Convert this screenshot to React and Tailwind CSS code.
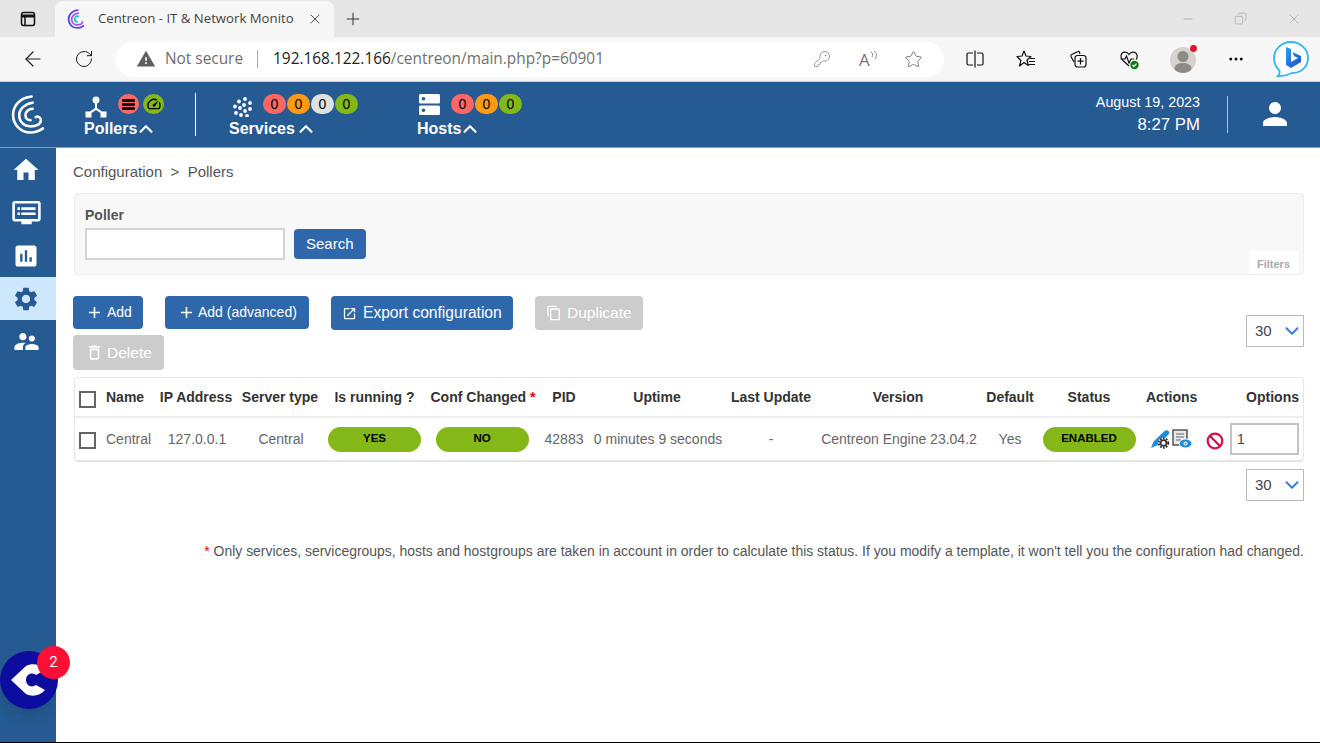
import React from 'react';
import { ArrowLeft, RotateCw, KeyRound, Star, Plus, X, Minus, Copy, MoreHorizontal, ChevronUp, ChevronDown } from 'lucide-react';
import { MdWarning, MdHome, MdDvr, MdAssessment, MdSettings, MdSupervisorAccount, MdPerson, MdAdd, MdOpenInNew, MdContentCopy, MdDeleteOutline, MdSpeed } from 'react-icons/md';

const gridCols = 'grid-cols-[25px_55px_82px_86px_103px_114px_48px_138px_90px_164px_60px_98px_92px_74px]';

const Dot = ({ color, children }) => (
  <span className={`flex h-[20px] w-[23px] items-center justify-center rounded-full text-sm text-black ${color}`}>{children}</span>
);

const Logo = () => (
  <svg width="34" height="41" viewBox="0 0 33 39" fill="none" stroke="white" strokeWidth="2.5" strokeLinecap="round">
    <path d="M20 2C9 3 2 11 2 20c0 10 8 17 17 17 5 0 9-2 12-4" />
    <path d="M21 8C14 9 8 14 8 20c0 7 5 11 11 11 5 0 10-2 10-6 0-3-3-4-5-3" />
    <path d="M21 14c-4 0-7 3-7 6s2 5 5 5" />
  </svg>
);

const PollersIcon = () => (
  <svg width="24" height="22" viewBox="0 0 24 22" fill="white">
    <circle cx="12" cy="4" r="3.5" />
    <path d="M11 6h2v6l5.500 4-1.200 1.500L12 14l-5.300 3.500L5.500 16 11 12z" />
    <rect x="1.500" y="15.500" width="6" height="6" />
    <rect x="16.500" y="15.500" width="6" height="6" />
  </svg>
);

const ServicesIcon = () => (
  <svg width="20" height="20" viewBox="0 0 20 20" fill="white">
    {[[12, 2], [6, 4.500], [17, 6], [11, 8], [2, 9.500], [7, 11], [17, 12], [12, 14], [3, 16], [8, 18], [14, 19]].map(([cx, cy]) => (
      <circle key={`${cx}-${cy}`} cx={cx} cy={cy} r="1.900" />
    ))}
  </svg>
);

const HostsIcon = () => (
  <svg width="21" height="21" viewBox="0 0 21 21">
    <rect fill="white" x="0" y="0" width="21" height="9.500" rx="1.500" />
    <rect fill="white" x="0" y="11.500" width="21" height="9.500" rx="1.500" />
    <circle cx="4.500" cy="4.700" r="1.800" fill="#255a92" />
    <circle cx="4.500" cy="16.200" r="1.800" fill="#255a92" />
  </svg>
);

const SplitIcon = () => (
  <svg width="20" height="20" viewBox="0 0 20 20" fill="none" stroke="#111" strokeWidth="1.200">
    <path d="M8 4H3.500A1.500 1.500 0 0 0 2 5.500v9A1.500 1.500 0 0 0 3.500 16H8" />
    <path d="M12 4h4.500A1.500 1.500 0 0 1 18 5.500v9a1.500 1.500 0 0 1-1.500 1.500H12" />
    <path d="M10 1.500v17" />
  </svg>
);

const FavoritesIcon = () => (
  <svg width="20" height="20" viewBox="0 0 20 20" fill="none" stroke="#111" strokeWidth="1.200" strokeLinejoin="round">
    <path d="M8 2l2 5 5 .5-4 3.500 1.300 5.500L8 13.500l-4.500 3.500 1.400-5.500L1 7.500 6 7z" />
    <path d="M14 9.500h5M13 12.500h6M13 15.500h6" />
  </svg>
);

const CollectionsIcon = () => (
  <svg width="20" height="20" viewBox="0 0 20 20" fill="none" stroke="#111" strokeWidth="1.200">
    <path d="M6 13 3 7.500a1.500 1.500 0 0 1 .7-2L9.500 2.700a1.500 1.500 0 0 1 2 .6L12 5" />
    <rect x="7" y="6.500" width="11" height="11.500" rx="2.500" />
    <path d="M12.500 9v6.500M9.500 12.200h6" />
  </svg>
);

const HealthIcon = () => (
  <svg width="21" height="21" viewBox="0 0 21 21" fill="none">
    <path d="M10 17 3.500 11C1 8.500 1.500 4 5 3.200c2-.4 4 .6 5 2.300 1-1.700 3-2.700 5-2.300 3.500.8 4 5 2 7.500" stroke="#111" strokeWidth="1.200" />
    <path d="M1.500 10H6l1.500-3 2.500 7 2-4h3" stroke="#111" strokeWidth="1.200" />
    <circle cx="15.500" cy="16" r="4.200" fill="#107c10" />
    <path d="M13.500 16l1.500 1.500 2.500-2.800" stroke="white" strokeWidth="1.200" />
  </svg>
);

const Avatar = () => (
  <svg width="28" height="30" viewBox="0 0 28 30">
    <circle cx="13" cy="16" r="13" fill="#d6d3cf" />
    <circle cx="13" cy="12.500" r="5.500" fill="#8d8a87" />
    <ellipse cx="13" cy="24" rx="8.500" ry="5" fill="#8d8a87" />
    <circle cx="23.500" cy="4.500" r="3.400" fill="#e81123" />
  </svg>
);

const BingIcon = () => (
  <svg width="36" height="36" viewBox="0 0 36 36" fill="none">
    <defs>
      <linearGradient id="bingB" x1="0" y1="0" x2="1" y2="1">
        <stop offset="0" stopColor="#2aa0f0" />
        <stop offset="1" stopColor="#1a4fd0" />
      </linearGradient>
    </defs>
    <path d="M18 1c9 0 17 7 17 16s-7 15-16 15c-4 2-8 3-14 3 2-2 2-4 1-6C3 26 1 22 1 17 1 8 9 1 18 1z" fill="white" stroke="#35b5ef" strokeWidth="1.800" />
    <path d="M13 6l5 2v13l7-4-4-2-1.500-4L28 15v6l-10 6-5-3z" fill="url(#bingB)" />
  </svg>
);

const BrowserChrome = () => (
  <div className="font-['Open_Sans',sans-serif]">
    <div className="flex h-[37px] bg-[#e6e6e6]">
      <div className="flex w-[55px] items-center justify-center">
        <svg width="16" height="16" viewBox="0 0 16 16" fill="none" stroke="#111" strokeWidth="1.500">
          <rect x="1.500" y="1.500" width="13" height="13" rx="2" />
          <path d="M1.500 5h13" strokeWidth="3" />
          <path d="M5 5v9" />
        </svg>
      </div>
      <div className="mt-[1px] flex w-[279px] items-center rounded-t-lg bg-[#f7f7f7] pl-[12px]">
        <svg width="18" height="20" viewBox="0 0 33 39" fill="none" strokeWidth="3.500" strokeLinecap="round">
          <path stroke="#4f46e5" d="M20 2C9 3 2 11 2 20c0 10 8 17 17 17 5 0 9-2 12-4" />
          <path stroke="#a855f7" d="M21 8C14 9 8 14 8 20c0 7 5 11 11 11 5 0 10-2 10-6" />
          <path stroke="#22c7a9" d="M21 14c-4 0-7 3-7 6s2 5 5 5" />
        </svg>
        <span className="ml-[13px] w-[200px] whitespace-nowrap text-[13.2px] text-[#444]">Centreon - IT &amp; Network Monito</span>
        <X size={16} strokeWidth={1.300} className="ml-[9px] text-[#333]" />
      </div>
      <div className="flex w-[38px] items-center justify-center">
        <Plus size={20} strokeWidth={1.200} className="text-[#333]" />
      </div>
      <div className="ml-auto flex items-center gap-[39px] pr-[18px] text-[#a5a5a5]">
        <Minus size={14} strokeWidth={1.500} />
        <Copy size={13} strokeWidth={1.300} className="-scale-x-100" />
        <X size={16} strokeWidth={1.100} />
      </div>
    </div>
    <div className="flex h-[45px] items-center border-b border-[#cfcfcf] bg-[#f7f7f7]">
      <div className="flex w-[116px] items-center pl-[21px]">
        <ArrowLeft size={24} strokeWidth={1.200} className="text-[#222]" />
        <RotateCw size={20} strokeWidth={1.200} className="ml-[29px] text-[#222]" />
      </div>
      <div className="flex h-[35px] w-[828px] items-center rounded-full bg-white pl-[20px]">
        <MdWarning size={20} className="text-[#5f5f5f]" />
        <span className="ml-[9px] text-[15.400px] text-[#6f6f6f]">Not secure</span>
        <span className="ml-[14px] h-[18px] w-px bg-[#aaa]" />
        <span className="ml-[15px] text-[15.400px] text-[#222]">192.168.122.166<span className="text-[#6f6f6f]">/centreon/main.php?p=60901</span></span>
        <div className="ml-auto flex items-center pr-[21px] text-[#777]">
          <KeyRound size={18} strokeWidth={1} />
          <span className="ml-[28px] flex w-[20px] items-start text-[17px] leading-none">
            A
            <svg width="8" height="10" viewBox="0 0 8 10" fill="none" stroke="currentColor" strokeWidth="0.900">
              <path d="M1 1c2 1 2 3 1 5M4 0c3 2 3 5 1 8" />
            </svg>
          </span>
          <Star size={19} strokeWidth={1.200} className="ml-[25px]" />
        </div>
      </div>
      <div className="flex flex-1 items-center pl-[21px] text-[#111]">
        <SplitIcon />
        <span className="ml-[31px]"><FavoritesIcon /></span>
        <span className="ml-[32px]"><CollectionsIcon /></span>
        <span className="ml-[31px]"><HealthIcon /></span>
        <span className="ml-[30px]"><Avatar /></span>
        <MoreHorizontal size={18} className="ml-[29px]" />
        <span className="ml-[28px]"><BingIcon /></span>
      </div>
    </div>
  </div>
);

const Header = () => (
  <header className="flex h-[66px] items-stretch border-b border-[#7ea2c6] bg-[#255a92] font-['Liberation_Sans',sans-serif] text-white">
    <div className="flex w-[56px] items-center justify-center pb-[1px]">
      <Logo />
    </div>
    <div className="ml-[28px] flex w-[111px] flex-col pt-[12px]">
      <div className="flex h-[24px] items-start">
        <div className="mt-[2px]"><PollersIcon /></div>
        <span className="ml-[10px] flex h-[20px] w-[21px] items-center justify-center rounded-full bg-[#ff6666]">
          <svg width="13" height="13" viewBox="0 0 13 13" fill="#111"><rect y="1" width="13" height="3" rx="1" /><rect y="5" width="13" height="3" rx="1" /><rect y="9" width="13" height="3" rx="1" /></svg>
        </span>
        <span className="ml-[4px] flex h-[20px] w-[21px] items-center justify-center rounded-full bg-[#84b819] text-black">
          <MdSpeed size={16} />
        </span>
      </div>
      <div className="flex items-center text-[16px] font-bold leading-[20px]">
        Pollers<ChevronUp size={22} strokeWidth={2.400} className="-ml-[2px]" />
      </div>
    </div>
    <div className="my-[11px] w-px bg-white" />
    <div className="ml-[33px] flex w-[188px] flex-col pt-[12px]">
      <div className="flex h-[24px] items-start gap-[1px]">
        <div className="ml-[4px] mr-[9px] mt-[3px]"><ServicesIcon /></div>
        <Dot color="bg-[#ff6666]">0</Dot>
        <Dot color="bg-[#ff9a13]">0</Dot>
        <Dot color="bg-[#e0e0e0]">0</Dot>
        <Dot color="bg-[#84b819]">0</Dot>
      </div>
      <div className="flex items-center text-[16px] font-bold leading-[20px]">
        Services<ChevronUp size={22} strokeWidth={2.400} />
      </div>
    </div>
    <div className="flex flex-col pt-[12px]">
      <div className="flex h-[24px] items-start gap-[1px]">
        <div className="ml-[2px] mr-[10px]"><HostsIcon /></div>
        <Dot color="bg-[#ff6666]">0</Dot>
        <Dot color="bg-[#ff9a13]">0</Dot>
        <Dot color="bg-[#84b819]">0</Dot>
      </div>
      <div className="flex items-center text-[16px] font-bold leading-[20px]">
        Hosts<ChevronUp size={22} strokeWidth={2.400} className="-ml-[2px]" />
      </div>
    </div>
    <div className="ml-auto flex flex-col items-end pt-[10px] text-right">
      <div className="text-[14.300px] leading-[20px]">August 19, 2023</div>
      <div className="mt-[3px] text-[16.800px] leading-[20px]">8:27 PM</div>
    </div>
    <div className="my-[14px] ml-[27px] w-px bg-[#a9bfd6]" />
    <div className="flex w-[92px] items-center justify-center pb-[1px] pl-[2px]">
      <MdPerson size={36} />
    </div>
  </header>
);

const Sidebar = () => (
  <aside className="relative w-[56px] shrink-0 bg-[#255a92] pr-[4px] text-white">
    <div className="flex h-[43px] items-center justify-center"><MdHome size={30} /></div>
    <div className="flex h-[43px] items-center justify-center"><MdDvr size={31} /></div>
    <div className="flex h-[43px] items-center justify-center"><MdAssessment size={28} /></div>
    <div className="-mr-[4px] flex h-[43px] items-center justify-center bg-[#cde7fd] pr-[4px] text-[#255a92]"><MdSettings size={28} /></div>
    <div className="flex h-[43px] items-center justify-center"><MdSupervisorAccount size={29} /></div>
    <div className="absolute left-0 top-[503px] flex h-[58px] w-[58px] items-center justify-center rounded-full bg-[#0c0c9e] shadow-lg">
      <svg width="36" height="34" viewBox="0 0 36 34" fill="white">
        <path d="M0 17 15 3c6-3 14-2 19 4l-9 5c-4-3-10-1-10 5 0 6 6 8 10 5l9 5c-5 6-13 7-19 4z" />
      </svg>
      <span className="absolute -right-[12px] -top-[5px] flex h-[33px] w-[33px] items-center justify-center rounded-full bg-[#fa0f35] font-['Roboto',sans-serif] text-[15px] text-white">2</span>
    </div>
  </aside>
);

const Button = ({ icon, children, disabled, className = '' }) => (
  <button className={`flex items-center rounded text-[14px] text-white ${disabled ? 'bg-[#cccccc]' : 'bg-[#2e68aa]'} ${className}`}>
    {icon}
    {children}
  </button>
);

const Pill = ({ children }) => (
  <span className="flex h-[25px] w-[93px] items-center justify-center rounded-full bg-[#84b819] text-[11.500px] font-bold text-black">{children}</span>
);

const Checkbox = () => <span className="block h-[17px] w-[17px] border-2 border-[#666] bg-white" />;

const PageSelect = () => (
  <div className="flex h-[32px] w-[58px] items-center justify-between border border-[#bbb] bg-white pl-[8px] text-[15px] text-[#444]">
    30
    <ChevronDown size={22} strokeWidth={2.200} className="text-[#3d7fe0]" />
  </div>
);

const headers = ['IP Address', 'Server type', 'Is running ?'];

const PollersTable = () => (
  <div className="ml-px mt-[7px] rounded border border-[#e6e6e6] text-[14px] shadow-[0_1px_1px_rgba(0,0,0,0.12)]">
    <div className={`grid h-[40px] items-center border-b-2 border-[#eeeeee] text-center font-bold text-[#333] ${gridCols}`}>
      <div className="pl-[4px] pt-[4px]"><Checkbox /></div>
      <div className="pl-[6px] text-left">Name</div>
      {headers.map((label) => <div key={label} className="whitespace-nowrap">{label}</div>)}
      <div className="whitespace-nowrap">Conf Changed <span className="text-[#e00]">*</span></div>
      <div>PID</div>
      <div>Uptime</div>
      <div className="whitespace-nowrap">Last Update</div>
      <div>Version</div>
      <div>Default</div>
      <div>Status</div>
      <div className="pl-[8px] text-left">Actions</div>
      <div className="pr-[5px] text-right">Options</div>
    </div>
    <div className={`grid h-[42px] items-center text-center text-[#666] ${gridCols}`}>
      <div className="pl-[4px] pt-[2px]"><Checkbox /></div>
      <div className="pl-[6px] text-left">Central</div>
      <div className="pl-[2px]">127.0.0.1</div>
      <div className="pl-[2px]">Central</div>
      <div className="flex justify-center"><Pill>YES</Pill></div>
      <div className="flex justify-center pr-[2px]"><Pill>NO</Pill></div>
      <div>42883</div>
      <div className="whitespace-nowrap pl-[2px]">0 minutes 9 seconds</div>
      <div>-</div>
      <div className="whitespace-nowrap pl-[2px]">Centreon Engine 23.04.2</div>
      <div>Yes</div>
      <div className="flex justify-center"><Pill>ENABLED</Pill></div>
      <div className="flex items-center pl-[12px]">
        <svg width="20" height="20" viewBox="0 0 20 20">
          <path fill="#1b8fe0" d="M14.500 2c1-1 3-1 4 0s1 2.500 0 3.500L8 16l-7 3 2.500-6.500z" />
          <circle cx="13.500" cy="14" r="5.600" fill="white" />
          <circle cx="13.500" cy="14" r="4.700" fill="none" stroke="#333" strokeWidth="2" strokeDasharray="1.700 1.300" />
          <circle cx="13.500" cy="14" r="2.900" fill="none" stroke="#333" strokeWidth="1.600" />
        </svg>
        <svg width="20" height="20" viewBox="0 0 20 20" className="ml-[2px]">
          <rect x="1" y="1" width="14" height="15" fill="#e8e8e8" stroke="#555" strokeWidth="1.500" />
          <path d="M4 5h8M4 8h8M4 11h5" stroke="#666" />
          <ellipse cx="13.500" cy="14.500" rx="6.300" ry="4.500" fill="#1b8fe0" stroke="white" />
          <circle cx="13.500" cy="14.500" r="2" fill="white" />
          <circle cx="13.500" cy="14.500" r="1" fill="#1b8fe0" />
        </svg>
        <svg width="18" height="18" viewBox="0 0 18 18" fill="none" stroke="#dc0a4a" strokeWidth="2.200" className="ml-[14px] mt-[3px]">
          <circle cx="9" cy="9" r="7.300" />
          <path d="M4 4l10 10" />
        </svg>
      </div>
      <div className="pr-[5px]">
        <div className="flex h-[32px] items-center border-2 border-[#c4c4c4] pl-[5px] text-left text-[#444]">1</div>
      </div>
    </div>
  </div>
);

export default function App() {
  return (
    <div className="flex h-[743px] flex-col overflow-hidden border-b border-black bg-white">
      <BrowserChrome />
      <Header />
      <div className="flex flex-1 font-['Liberation_Sans',sans-serif]">
        <Sidebar />
        <main className="min-w-0 flex-1 pl-[17px] pr-[16px] pt-[15px]">
          <div className="text-[15px] leading-[18px] text-[#555]">Configuration&nbsp; &gt;&nbsp; Pollers</div>
          <section className="relative ml-px mt-[12px] h-[82px] rounded border border-[#eeeeee] bg-[#f8f8f8] pl-[10px] pt-[13px]">
            <div className="text-[14px] font-bold leading-[16px] text-[#555]">Poller</div>
            <div className="mt-[5px] flex items-center gap-[9px]">
              <div className="h-[32px] w-[200px] border-2 border-[#d4d4d4] bg-white" />
              <Button className="h-[30px] justify-center px-[12px]"><span className="text-[15px]">Search</span></Button>
            </div>
            <span className="absolute bottom-0 right-[5px] bg-white px-[8px] pb-[2px] pt-[5px] text-[11px] font-bold text-[#aaa]">Filters</span>
          </section>
          <div className="mt-[21px] flex items-start justify-between">
            <div className="flex w-[600px] flex-wrap gap-x-[22px] gap-y-[5px]">
              <Button className="h-[33px] w-[70px] pl-[12px]" icon={<MdAdd size={19} className="mr-[3px]" />}>Add</Button>
              <Button className="h-[33px] w-[144px] pl-[12px]" icon={<MdAdd size={19} className="mr-[2px]" />}>Add (advanced)</Button>
              <Button className="h-[34px] w-[182px] pl-[11px]" icon={<MdOpenInNew size={15} className="mr-[6px]" />}><span className="text-[15.600px]">Export configuration</span></Button>
              <Button disabled className="h-[34px] w-[108px] pl-[11px]" icon={<MdContentCopy size={16} className="mr-[5px]" />}><span className="text-[15.500px]">Duplicate</span></Button>
              <Button disabled className="h-[35px] w-[91px] pl-[12px]" icon={<MdDeleteOutline size={19} className="mr-[3px]" />}><span className="text-[15.500px]">Delete</span></Button>
            </div>
            <div className="mt-[19px]"><PageSelect /></div>
          </div>
          <PollersTable />
          <div className="mt-[8px] flex justify-end"><PageSelect /></div>
          <p className="mt-[40px] whitespace-nowrap text-right text-[13.940px] text-[#555]"><span className="text-[#e00]">*</span> Only services, servicegroups, hosts and hostgroups are taken in account in order to calculate this status. If you modify a template, it won't tell you the configuration had changed.</p>
        </main>
      </div>
    </div>
  );
}
